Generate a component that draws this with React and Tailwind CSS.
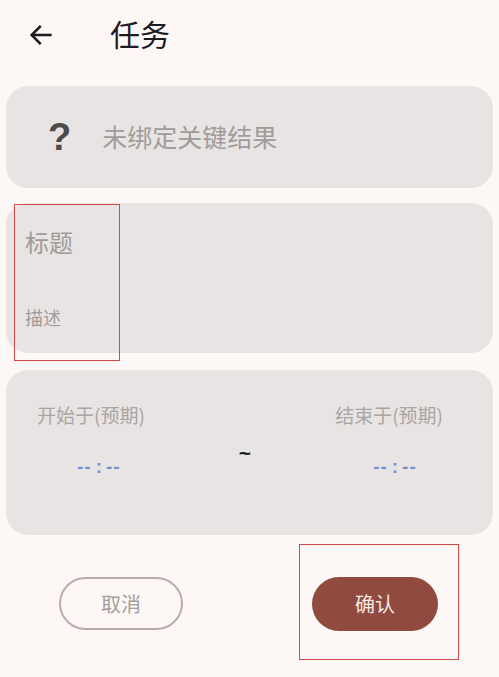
import React from 'react';

function BackArrow() {
  return (
    <svg width="28" height="28" viewBox="0 0 24 24" fill="none" stroke="#1c1b1f" strokeWidth="2.2" strokeLinecap="square">
      <path d="M20 12H5" />
      <path d="M11 5l-7 7 7 7" />
    </svg>
  );
}

function TimeField({ label, offset }) {
  return (
    <div className="flex flex-col items-start">
      <span className="text-[19px] text-[#a9a5a4] leading-[26px]">{label}</span>
      <span
        className={`flex items-center gap-[4px] mt-[29px] text-[19px] font-bold text-[#7391d4] leading-none ${offset}`}
        style={{ fontFamily: '"Liberation Sans", sans-serif' }}
      >
        <span className="tracking-[1px]">--</span>
        <span>:</span>
        <span className="tracking-[1px]">--</span>
      </span>
    </div>
  );
}

export default function App() {
  return (
    <div
      className="relative w-[499px] h-[677px] bg-[#fdf8f5] overflow-hidden"
      style={{ fontFamily: '"Noto Sans CJK SC", "Noto Sans", sans-serif' }}
    >
      <header className="flex items-center h-[70px] pl-[27px]">
        <BackArrow />
        <h1 className="ml-[55px] mb-[4px] text-[30px] text-[#1c1b1f]">任务</h1>
      </header>

      <div className="flex flex-col px-[6px] mt-[16px]">
        <div className="flex items-center h-[102px] rounded-[22px] bg-[#e8e4e3] pl-[42px]">
          <span
            className="text-[38px] font-bold text-[#4e4b4b] leading-none"
            style={{ fontFamily: '"Liberation Sans", sans-serif' }}
          >
            ?
          </span>
          <span className="ml-[31px] text-[25px] text-[#a09b9a]">未绑定关键结果</span>
        </div>

        <div className="flex flex-col h-[150px] mt-[15px] rounded-[22px] bg-[#e8e4e3] pl-[19px] pt-[22px]">
          <span className="text-[24px] text-[#a09b9a] leading-[34px]">标题</span>
          <span className="mt-[45px] text-[18px] text-[#a09b9a]">描述</span>
        </div>

        <div className="flex justify-between items-start h-[165px] mt-[17px] rounded-[22px] bg-[#e8e4e3] pl-[31px] pr-[50px] pt-[32px]">
          <TimeField label="开始于(预期)" offset="ml-[40px]" />
          <span
            className="mt-[40px] ml-[10px] text-[21px] font-bold text-[#1c1b1f] leading-none"
            style={{ fontFamily: '"Liberation Sans", sans-serif' }}
          >
            ~
          </span>
          <TimeField label="结束于(预期)" offset="ml-[38px]" />
        </div>
      </div>

      <div className="flex justify-between pl-[59px] pr-[61px] mt-[42px]">
        <button className="w-[124px] h-[53px] rounded-full border-2 border-[#b9adac] text-[20px] text-[#a39d9c]">
          取消
        </button>
        <button className="w-[126px] h-[54px] rounded-full bg-[#904a40] text-[20px] text-[#f7e9e4]">
          确认
        </button>
      </div>

      <div className="absolute left-[14px] top-[204px] w-[106px] h-[157px] border-[1.5px] border-[#d24b4b]" />
      <div className="absolute left-[299px] top-[544px] w-[160px] h-[116px] border-[1.5px] border-[#d24b4b]" />
    </div>
  );
}
